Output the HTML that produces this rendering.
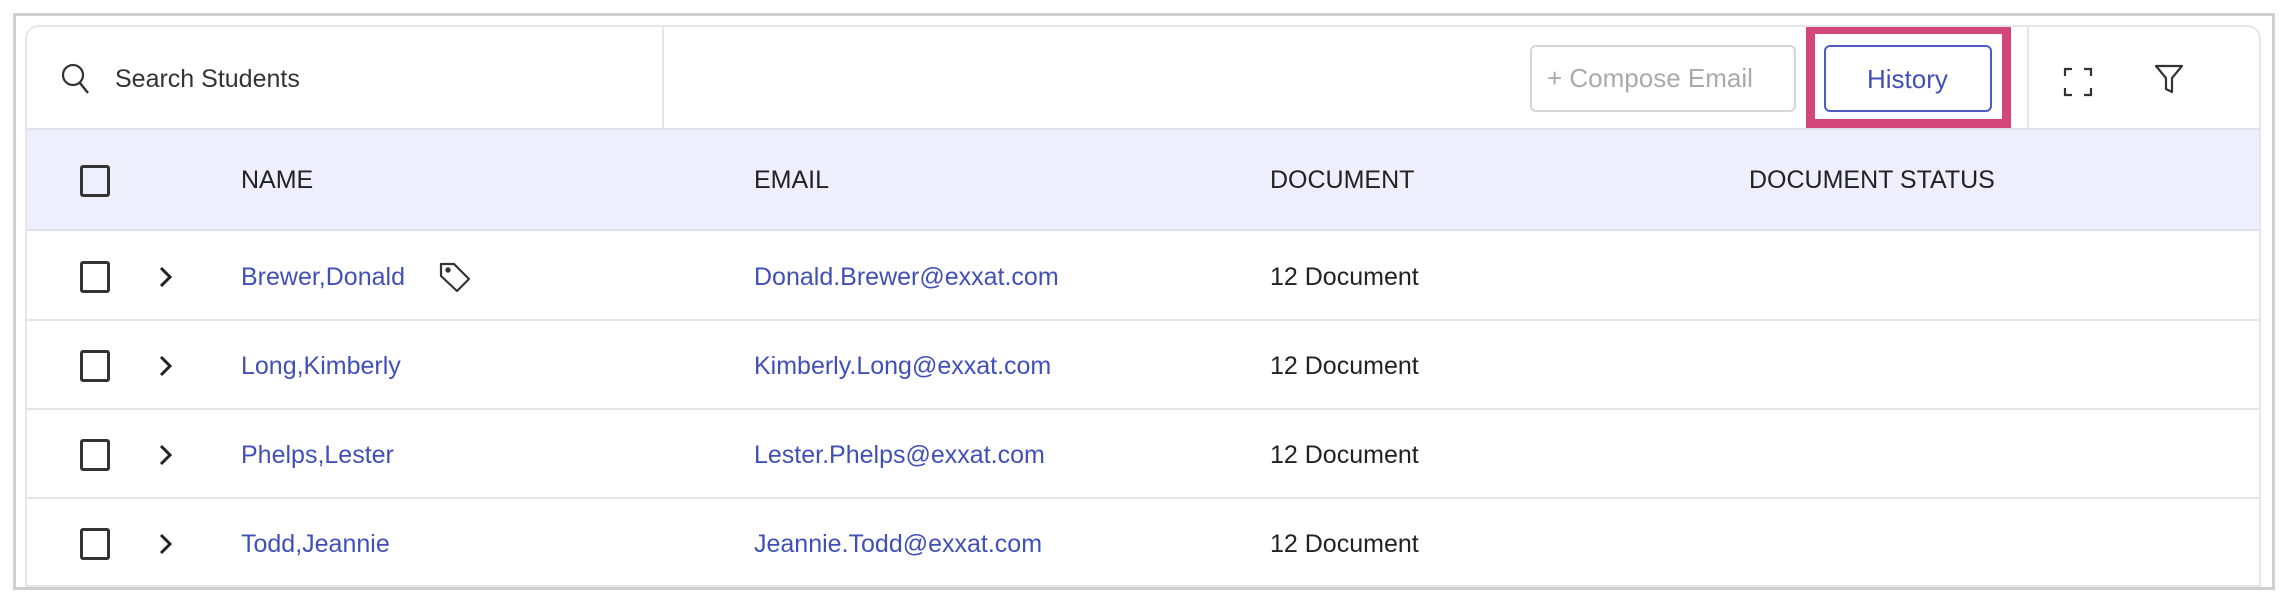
<!DOCTYPE html>
<html><head><meta charset="utf-8"><style>
*{box-sizing:border-box;margin:0;padding:0}
body{width:2288px;height:602px;background:#fff;font-family:"Liberation Sans",sans-serif;position:relative;overflow:hidden;color:#222}
.outer{position:absolute;left:13px;top:13px;width:2262px;height:577px;border:3px solid #cfcfcf}
.card{position:absolute;left:25px;top:25px;width:2236px;height:562px;border:2px solid #e6e6e6;border-radius:14px 14px 0 0;overflow:hidden}
.abs{position:absolute}
.t{position:absolute;font-size:25px;white-space:nowrap}
.hdr{position:absolute;left:0;top:101px;width:100%;height:103px;background:#eeeefc;border-top:2px solid #e0e0ea;border-bottom:2px solid #e0e0ea}
.line{position:absolute;left:0;width:100%;height:2px;background:#e4e4e4}
.cb{position:absolute;width:30px;height:32px;border:3px solid #333;border-radius:3px}
.link{color:#4150b8}
</style></head><body>
<div class="outer"></div>
<div class="card">
  <svg class="abs" style="left:32px;top:33px" width="34" height="38" viewBox="0 0 34 38"><circle cx="14" cy="15" r="10" fill="none" stroke="#333" stroke-width="2.2"/><line x1="21" y1="23" x2="29" y2="33" stroke="#333" stroke-width="2.4"/></svg>
  <div class="t" style="left:88px;top:38px;color:#333">Search Students</div>
  <div class="abs" style="left:635px;top:0;width:2px;height:101px;background:#e6e6e6"></div>
  <div class="abs" style="left:1503px;top:18px;width:266px;height:67px;border:2px solid #d6d6d6;border-radius:6px"></div>
  <div class="t" style="left:1520px;top:36px;color:#aaa;font-size:26px">+ Compose Email</div>
  <div class="abs" style="left:1779px;top:-2px;width:205px;height:103px;border:9px solid #d3467a"></div>
  <div class="abs" style="left:1797px;top:18px;width:168px;height:67px;border:2px solid #4d5cc4;border-radius:6px"></div>
  <div class="t link" style="left:1840px;top:37px;font-size:26px">History</div>
  <div class="abs" style="left:2000px;top:0;width:2px;height:101px;background:#e6e6e6"></div>
  <svg class="abs" style="left:2036px;top:40px" width="30" height="30" viewBox="0 0 30 30" fill="none" stroke="#333" stroke-width="2.2"><path d="M2 9V2h7M21 2h7v7M28 21v7h-7M9 28H2v-7"/></svg>
  <svg class="abs" style="left:2126px;top:37px" width="32" height="30" viewBox="0 0 32 30" fill="none" stroke="#333" stroke-width="2.2" stroke-linejoin="round"><path d="M3 2h26L19 14v14l-6-3V14z"/></svg>
  <div class="hdr">
    <div class="cb" style="left:53px;top:35px"></div>
    <div class="t" style="left:214px;top:36px">NAME</div>
    <div class="t" style="left:727px;top:36px">EMAIL</div>
    <div class="t" style="left:1243px;top:36px">DOCUMENT</div>
    <div class="t" style="left:1722px;top:36px">DOCUMENT STATUS</div>
  </div>
  <div class="line" style="top:292px"></div>
  <div class="line" style="top:381px"></div>
  <div class="line" style="top:470px"></div>

  <div class="cb" style="left:53px;top:234px"></div>
  <svg class="abs" style="left:130px;top:238px" width="16" height="24" viewBox="0 0 16 24"><path d="M4 3l9 9-9 9" fill="none" stroke="#222" stroke-width="3"/></svg>
  <div class="t link" style="left:214px;top:236px">Brewer,Donald</div>
  <svg class="abs" style="left:410px;top:232px" width="36" height="36" viewBox="0 0 36 36" fill="none" stroke="#333" stroke-width="2.2" stroke-linejoin="round"><path d="M4 5h13l15 15-12 12L4 17z"/><circle cx="11" cy="11" r="1.6" fill="#333"/></svg>
  <div class="t link" style="left:727px;top:236px">Donald.Brewer@exxat.com</div>
  <div class="t" style="left:1243px;top:236px">12 Document</div>

  <div class="cb" style="left:53px;top:323px"></div>
  <svg class="abs" style="left:130px;top:327px" width="16" height="24" viewBox="0 0 16 24"><path d="M4 3l9 9-9 9" fill="none" stroke="#222" stroke-width="3"/></svg>
  <div class="t link" style="left:214px;top:325px">Long,Kimberly</div>
  <div class="t link" style="left:727px;top:325px">Kimberly.Long@exxat.com</div>
  <div class="t" style="left:1243px;top:325px">12 Document</div>

  <div class="cb" style="left:53px;top:412px"></div>
  <svg class="abs" style="left:130px;top:416px" width="16" height="24" viewBox="0 0 16 24"><path d="M4 3l9 9-9 9" fill="none" stroke="#222" stroke-width="3"/></svg>
  <div class="t link" style="left:214px;top:414px">Phelps,Lester</div>
  <div class="t link" style="left:727px;top:414px">Lester.Phelps@exxat.com</div>
  <div class="t" style="left:1243px;top:414px">12 Document</div>

  <div class="cb" style="left:53px;top:501px"></div>
  <svg class="abs" style="left:130px;top:505px" width="16" height="24" viewBox="0 0 16 24"><path d="M4 3l9 9-9 9" fill="none" stroke="#222" stroke-width="3"/></svg>
  <div class="t link" style="left:214px;top:503px">Todd,Jeannie</div>
  <div class="t link" style="left:727px;top:503px">Jeannie.Todd@exxat.com</div>
  <div class="t" style="left:1243px;top:503px">12 Document</div>
</div>
</body></html>
